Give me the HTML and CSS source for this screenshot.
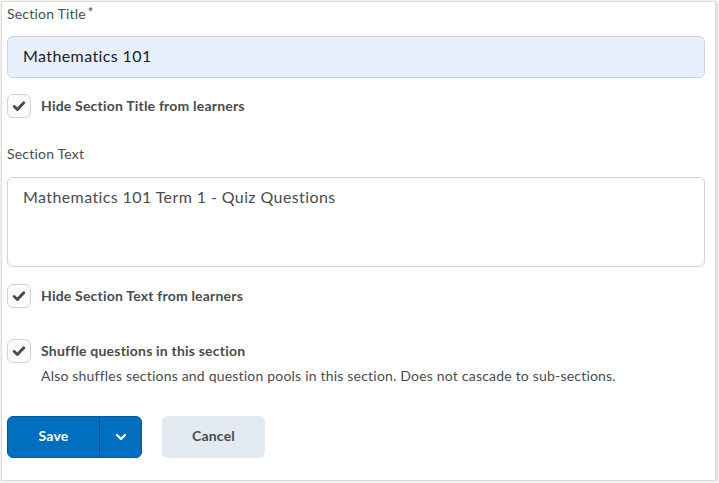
FILE: index.html
```html
<!DOCTYPE html>
<html>
<head>
<meta charset="utf-8">
<link rel="stylesheet" href="styles.css">
</head>
<body>
<div class="frame">
  <div class="field-label">Section Title<span class="req">*</span></div>
  <div class="input">Mathematics 101</div>

  <div class="check-row row-1">
    <span class="box"><svg viewBox="0 0 24 24" width="24" height="24"><path d="M6.8 12.6 L10.2 15.8 L17.2 8.4" fill="none" stroke="#494c4e" stroke-width="3.2" stroke-linecap="round" stroke-linejoin="round"/></svg></span>
    <span class="check-label">Hide Section Title from learners</span>
  </div>

  <div class="field-label label-2">Section Text</div>
  <div class="textarea">Mathematics 101 Term 1 - Quiz Questions</div>

  <div class="check-row row-2">
    <span class="box"><svg viewBox="0 0 24 24" width="24" height="24"><path d="M6.8 12.6 L10.2 15.8 L17.2 8.4" fill="none" stroke="#494c4e" stroke-width="3.2" stroke-linecap="round" stroke-linejoin="round"/></svg></span>
    <span class="check-label">Hide Section Text from learners</span>
  </div>

  <div class="check-row row-3">
    <span class="box"><svg viewBox="0 0 24 24" width="24" height="24"><path d="M6.8 12.6 L10.2 15.8 L17.2 8.4" fill="none" stroke="#494c4e" stroke-width="3.2" stroke-linecap="round" stroke-linejoin="round"/></svg></span>
    <span class="check-label">Shuffle questions in this section</span>
  </div>
  <div class="desc">Also shuffles sections and question pools in this section. Does not cascade to sub-sections.</div>

  <div class="buttons">
    <div class="split">
      <span class="save">Save</span>
      <span class="caret"><svg viewBox="0 0 14 14" width="14" height="14"><path d="M3 5 L7 9 L11 5" fill="none" stroke="#fff" stroke-width="2.4" stroke-linecap="round" stroke-linejoin="round"/></svg></span>
    </div>
    <span class="cancel">Cancel</span>
  </div>
</div>
</body>
</html>
```
FILE: styles.css
```css
html, body {
  margin: 0;
  padding: 0;
  background: #f2f2f2;
}
body {
  font-family: Lato, "Open Sans", sans-serif;
  color: #494c4e;
}
.frame {
  box-sizing: border-box;
  width: 715px;
  height: 480px;
  margin: 1px 0 0 1px;
  background: #fff;
  border: 1px solid #dcdcdc;
  box-shadow: 2px 2px 0 #e2e2e2;
  padding: 0 10px 0 5px;
}
.field-label {
  font-size: 14px;
  letter-spacing: 0.2px;
  line-height: 20px;
  height: 20px;
  color: #494c4e;
}
.req {
  font-size: 13px;
  margin-left: 2px;
  vertical-align: 2px;
}
.input {
  box-sizing: border-box;
  margin-top: 14px;
  height: 42px;
  background: #e8f0fe;
  border: 1px solid #cdd5dc;
  border-radius: 6px;
  padding: 0 15px 2px;
  font-size: 16px;
  letter-spacing: 0.4px;
  line-height: 38px;
  color: #202122;
}
.check-row {
  display: flex;
  align-items: center;
  height: 24px;
  gap: 10px;
}
.row-1 { margin-top: 16px; }
.row-2 { margin-top: 17px; }
.row-3 { margin-top: 31px; }
.box {
  box-sizing: border-box;
  width: 24px;
  height: 24px;
  border: 1px solid #cdd5dc;
  border-radius: 6px;
  background: #f9fbfc;
  display: flex;
  align-items: center;
  justify-content: center;
}
.box svg { display: block; width: 22px; height: 22px; }
.check-label {
  font-size: 14px;
  letter-spacing: 0.2px;
  font-weight: 700;
  color: #494c4e;
  line-height: 24px;
}
.label-2 { margin-top: 26px; }
.textarea {
  box-sizing: border-box;
  margin-top: 13px;
  height: 90px;
  border: 1px solid #cdd5dc;
  border-radius: 6px;
  padding: 8px 15px;
  font-size: 16px;
  letter-spacing: 0.4px;
  line-height: 22px;
  color: #494c4e;
}
.desc {
  margin-top: 3px;
  padding-left: 34px;
  font-size: 14px;
  letter-spacing: 0.2px;
  line-height: 20px;
  color: #494c4e;
}
.buttons {
  margin-top: 30px;
  display: flex;
  gap: 20px;
}
.split {
  display: flex;
  height: 42px;
  width: 135px;
  box-sizing: border-box;
  background: #006fbf;
  border: 1px solid #005a9e;
  border-radius: 6px;
  color: #fff;
  font-size: 14px;
  letter-spacing: 0.2px;
  font-weight: 700;
}
.save {
  width: 91px;
  display: flex;
  align-items: center;
  justify-content: center;
  border-right: 1px solid #004f8c;
  padding-bottom: 3px;
}
.caret {
  flex: 1;
  display: flex;
  align-items: center;
  justify-content: center;
}
.caret svg { display: block; }
.cancel {
  box-sizing: border-box;
  width: 103px;
  height: 42px;
  background: #e3e9f1;
  border-radius: 6px;
  display: flex;
  align-items: center;
  justify-content: center;
  padding-bottom: 3px;
  font-size: 14px;
  letter-spacing: 0.2px;
  font-weight: 700;
  color: #494c4e;
}
```
